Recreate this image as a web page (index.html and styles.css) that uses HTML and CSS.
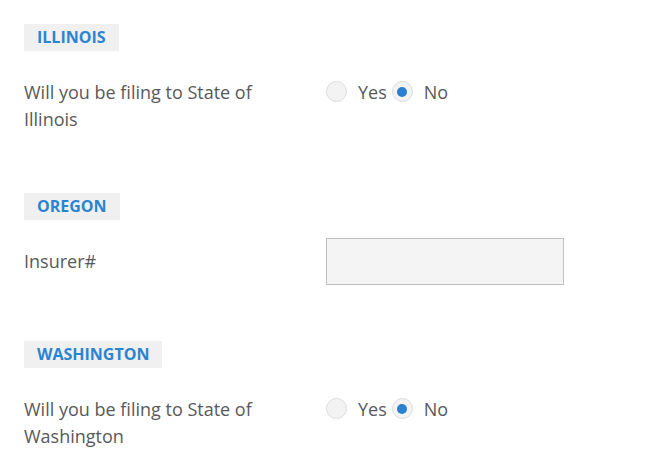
FILE: index.html
```html
<!DOCTYPE html>
<html>
<head>
<meta charset="utf-8">
<link rel="stylesheet" href="styles.css">
</head>
<body>
<div class="page">
  <section class="state">
    <h2 class="state-title">ILLINOIS</h2>
    <div class="field">
      <div class="field-label">Will you be filing to State of Illinois</div>
      <div class="radios">
        <label class="radio"><span class="dot"></span><span class="radio-text">Yes</span></label>
        <label class="radio"><span class="dot checked"></span><span class="radio-text">No</span></label>
      </div>
    </div>
  </section>
  <section class="state state-short">
    <h2 class="state-title">OREGON</h2>
    <div class="field">
      <div class="field-label">Insurer#</div>
      <div class="input"></div>
    </div>
  </section>
  <section class="state">
    <h2 class="state-title">WASHINGTON</h2>
    <div class="field">
      <div class="field-label">Will you be filing to State of Washington</div>
      <div class="radios">
        <label class="radio"><span class="dot"></span><span class="radio-text">Yes</span></label>
        <label class="radio"><span class="dot checked"></span><span class="radio-text">No</span></label>
      </div>
    </div>
  </section>
</div>
</body>
</html>
```
FILE: styles.css
```css
html, body {
  margin: 0;
  padding: 0;
  background: #ffffff;
}
.page {
  padding: 24px 0 0 24px;
  font-family: "Open Sans", "Liberation Sans", sans-serif;
  color: #58595b;
}
.state {
  margin-bottom: 49px;
}
.state-short {
  margin-bottom: 55px;
}
.state-title {
  display: inline-block;
  margin: 0;
  padding: 0 13px;
  height: 27px;
  line-height: 27px;
  background: #f0f0f0;
  color: #2b84d0;
  font-size: 16px;
  font-weight: 700;
}
.field {
  display: flex;
  margin-top: 17px;
}
.field-label {
  width: 256px;
  margin-right: 46px;
  padding: 11px 0;
  font-size: 18px;
  line-height: 27px;
}
.radios {
  display: flex;
  align-items: center;
  gap: 5px;
  height: 27px;
  margin-top: 10px;
}
.radio {
  display: flex;
  align-items: center;
  font-size: 18px;
}
.dot {
  box-sizing: border-box;
  width: 21px;
  height: 21px;
  border-radius: 50%;
  border: 1px solid #dcdcdc;
  background: #f3f3f3;
  margin-right: 11px;
  display: flex;
  align-items: center;
  justify-content: center;
}
.dot.checked::after {
  content: "";
  width: 10px;
  height: 10px;
  border-radius: 50%;
  background: #2a7fcf;
}
.input {
  box-sizing: border-box;
  width: 238px;
  height: 47px;
  margin-top: 1px;
  border: 1px solid #c2c2c2;
  background: #f4f4f4;
}
```
